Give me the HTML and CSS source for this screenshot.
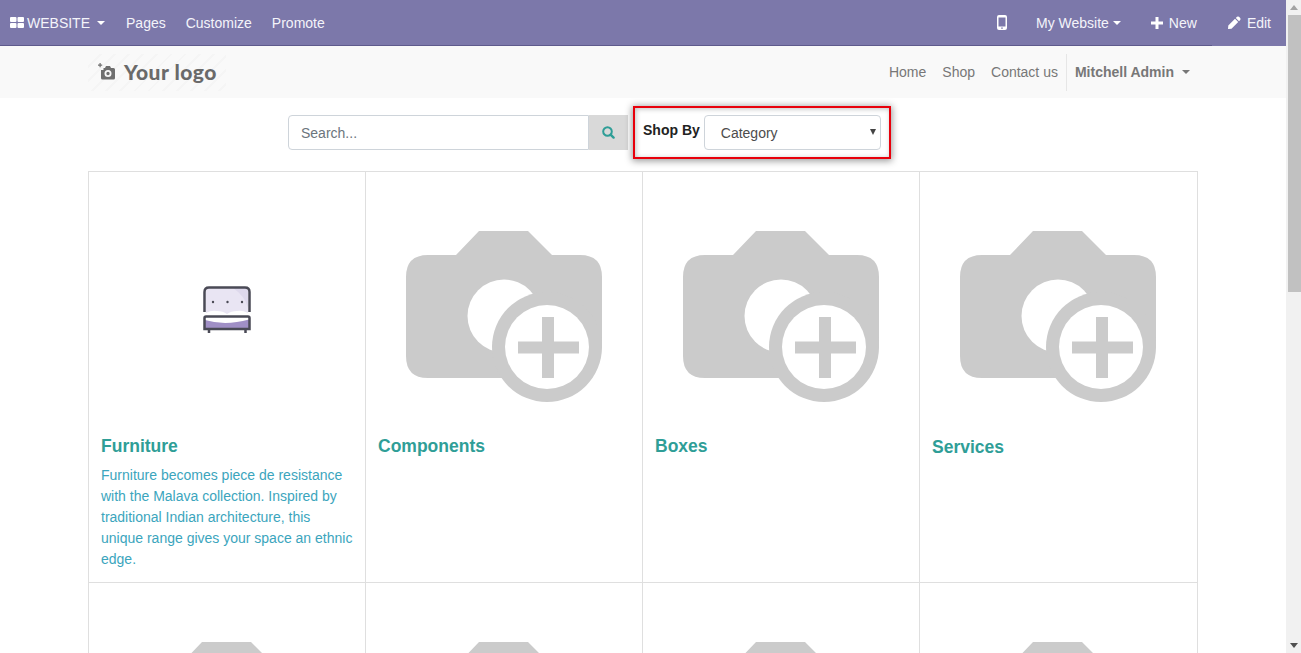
FILE: index.html
```html
<!DOCTYPE html>
<html lang="en">
<head>
  <meta charset="UTF-8" />
  <title>Shop By Category</title>
  <link rel="stylesheet" href="styles.css">
</head>

<body>
  <svg class="defs" width="0" height="0">
    <symbol id="placeholder" viewBox="0 0 196 172">
      <path fill="#cbcbcb" d="M50 24 L73 0 H122 L146 24 H174 Q196 24 196 46 V116 L186 147 H22 Q0 147 0 125 V46 Q0 24 22 24 Z" />
      <circle fill="#fff" cx="98" cy="85" r="36.500" />
      <circle fill="#cbcbcb" cx="141" cy="116" r="55" />
      <circle fill="#fff" cx="141" cy="116" r="42" />
      <path fill="#cbcbcb" d="M136 86 H148 V110.500 H173 V122.500 H148 V147 H136 V122.500 H112 V110.500 H136 Z" />
    </symbol>
  </svg>

  <div class="page">
    <!-- barre admin -->
    <nav class="admin-bar">
      <div class="admin-left">
        <a class="admin-link brand">
          <svg class="ico-apps" viewBox="0 0 14 11"><path fill="#fff" d="M0 1q0-1 1-1h4.500q1 0 1 1v3q0 1-1 1H1Q0 5 0 4zM7.500 1q0-1 1-1H13q1 0 1 1v3q0 1-1 1H8.500q-1 0-1-1zM0 7q0-1 1-1h4.500q1 0 1 1v3q0 1-1 1H1q-1 0-1-1zM7.500 7q0-1 1-1H13q1 0 1 1v3q0 1-1 1H8.500q-1 0-1-1z" /></svg>
          WEBSITE <span class="caret caret-wide"></span>
        </a>
        <a class="admin-link">Pages</a>
        <a class="admin-link">Customize</a>
        <a class="admin-link">Promote</a>
      </div>
      <div class="admin-right">
        <a class="admin-link mobile">
          <svg class="ico-mobile" viewBox="0 0 10 15"><path fill="#fff" fill-rule="evenodd" d="M2 0H8Q10 0 10 2V13Q10 15 8 15H2Q0 15 0 13V2Q0 0 2 0ZM1.500 2.500V11.500H8.500V2.500ZM4.200 12.500V13.800H5.800V12.500Z" /></svg>
        </a>
        <a class="admin-link site">My Website<span class="caret"></span></a>
        <a class="admin-link new">
          <svg class="ico-plus" viewBox="0 0 12 12"><path fill="#fff" d="M4.500 0H7.500V4.500H12V7.500H7.500V12H4.500V7.500H0V4.500H4.500Z" /></svg>
          New
        </a>
        <a class="admin-link edit">
          <svg class="ico-pencil" viewBox="0 0 13 13"><path fill="#fff" d="M9 .8Q10 0 11 .8L12.200 2Q13 3 12.200 4L11 5.200 7.800 2ZM7 2.800 10.200 6 3.500 12.700 0 13 .3 9.500Z" /></svg>
          Edit
        </a>
      </div>
    </nav>

    <!-- entete du site -->
    <header class="site-header">
      <div class="container header-row">
        <a class="logo">
          <svg class="ico-logo" viewBox="0 0 17 17"><path fill="#6f6f6f" fill-rule="evenodd" d="M1.500 0H2.700V1.500H4.200V2.700H2.700V4.200H1.500V2.700H0V1.500H1.500ZM8 3H12L13 5H15.500Q17 5 17 6.500V15Q17 16.500 15.500 16.500H4.500Q3 16.500 3 15V7H5.500V5H7ZM10 7A3.500 3.500 0 1 0 10 14 3.500 3.500 0 1 0 10 7ZM10 8.800A1.700 1.700 0 1 1 10 12.200 1.700 1.700 0 1 1 10 8.800Z" /></svg>
          <span class="logo-text">Your logo</span>
        </a>
        <div class="site-nav">
          <a class="site-link">Home</a>
          <a class="site-link">Shop</a>
          <a class="site-link">Contact us</a>
          <a class="site-user">Mitchell Admin <span class="caret caret-grey"></span></a>
        </div>
      </div>
    </header>

    <main class="container">
      <div class="filters">
        <div class="search-box">
          <input class="search-input" type="text" placeholder="Search...">
          <button class="search-btn">
            <svg class="ico-search" viewBox="0 0 13 13"><path fill="none" stroke="#2f9e97" stroke-width="2" d="M5.500 1.200A4.300 4.300 0 1 0 5.500 9.800 4.300 4.300 0 1 0 5.500 1.200Z" /><path stroke="#2f9e97" stroke-width="2.400" stroke-linecap="round" d="M8.800 8.800 11.600 11.600" /></svg>
          </button>
        </div>
        <div class="shop-by">
          <label class="shop-label">Shop By</label>
          <div class="shop-select">Category <span class="select-arrow"></span></div>
        </div>
      </div>

      <div class="category-grid">
        <div class="category">
          <div class="category-img">
            <svg class="bed" viewBox="0 0 48 47">
              <path fill="#e9e5f3" d="M3 27V6Q3 2 7 2H41Q45 2 45 6V27Q39 24 34 25 28 25 24 28 20 25 14 25 8 24 3 27Z" />
              <path fill="#ded9ec" d="M30 2H41Q45 2 45 6V22Q42 10 30 2Z" />
              <path fill="none" stroke="#4a4a56" stroke-width="2.500" d="M1.500 26V6Q1.500 1.500 6 1.500H42Q46.500 1.500 46.500 6V26" />
              <circle fill="#4a4a56" cx="10" cy="16" r="1.200" /><circle fill="#4a4a56" cx="24.500" cy="16" r="1.200" /><circle fill="#4a4a56" cx="39" cy="16" r="1.200" />
              <path fill="#a08fc6" d="M2 34Q22 40 46 33.500V44H2Z" />
              <path fill="none" stroke="#4a4a56" stroke-width="2.500" d="M1.500 43V32Q1.500 30.500 3 30.500H45Q46.500 30.500 46.500 32V43Z" />
              <path stroke="#4a4a56" stroke-width="2.500" d="M6 43V47M42.500 43V47" />
            </svg>
          </div>
          <h5 class="category-title">Furniture</h5>
          <p class="category-desc">Furniture becomes piece de resistance with the Malava collection. Inspired by traditional Indian architecture, this unique range gives your space an ethnic edge.</p>
        </div>
        <div class="category">
          <div class="category-img"><svg class="camera"><use href="#placeholder" /></svg></div>
          <h5 class="category-title">Components</h5>
        </div>
        <div class="category">
          <div class="category-img"><svg class="camera"><use href="#placeholder" /></svg></div>
          <h5 class="category-title">Boxes</h5>
        </div>
        <div class="category">
          <div class="category-img"><svg class="camera"><use href="#placeholder" /></svg></div>
          <h5 class="category-title title-low">Services</h5>
        </div>
        <div class="category">
          <div class="category-img"><svg class="camera"><use href="#placeholder" /></svg></div>
        </div>
        <div class="category">
          <div class="category-img"><svg class="camera"><use href="#placeholder" /></svg></div>
        </div>
        <div class="category">
          <div class="category-img"><svg class="camera"><use href="#placeholder" /></svg></div>
        </div>
        <div class="category">
          <div class="category-img"><svg class="camera"><use href="#placeholder" /></svg></div>
        </div>
      </div>
    </main>
  </div>

  <!-- barre de defilement -->
  <div class="scrollbar">
    <span class="scroll-arrow arrow-up"></span>
    <span class="scroll-thumb"></span>
    <span class="scroll-arrow arrow-down"></span>
  </div>
</body>
</html>
```

FILE: styles.css
```css
html, body {
  height: 100%;
  overflow: hidden;
}

body {
  margin: 0;
  display: flex;
  font-family: "Liberation Sans", Arial, sans-serif;
  font-size: 14px;
  color: #4c4c4c;
  background: #fff;
}

.defs {
  display: block;
  flex: none;
}

.page {
  flex: 1;
  min-width: 0;
}

.container {
  width: 1110px;
  margin: 0 auto;
}

/* barre admin */
.admin-bar {
  height: 45px;
  display: flex;
  justify-content: space-between;
  background: #7c78aa;
  border-bottom: 1px solid #5e5a8c;
  color: #fff;
}

.admin-left, .admin-right {
  display: flex;
  align-items: center;
}

.admin-link {
  display: flex;
  align-items: center;
  height: 46px;
  padding: 0 10px;
  color: #f4f4fa;
}

.brand {
  padding-right: 11px;
}

.ico-apps {
  width: 14px;
  height: 11px;
  margin-right: 3px;
}

.caret {
  display: inline-block;
  width: 0;
  height: 0;
  margin-left: 4px;
  border-top: 4px solid #fff;
  border-left: 4px solid transparent;
  border-right: 4px solid transparent;
}

.caret-wide {
  margin-left: 7px;
}

.caret-grey {
  border-top-color: #777;
  margin-left: 8px;
}

.mobile {
  padding: 0 19px 0 0;
}

.ico-mobile {
  width: 10px;
  height: 15px;
}

.site {
  padding: 0 16px 0 10px;
}

.new {
  padding: 0 15px 0 14px;
}

.ico-plus {
  width: 12px;
  height: 12px;
  margin-right: 6px;
}

.edit {
  height: 46px;
  padding: 0 15px 0 16px;
  background: #7c78aa;
}

.ico-pencil {
  width: 13px;
  height: 13px;
  margin-right: 6px;
}

/* entete */
.site-header {
  height: 52px;
  background: #f9f9f9;
}

.header-row {
  height: 100%;
  display: flex;
  justify-content: space-between;
  align-items: center;
}

.logo {
  display: flex;
  align-items: center;
  width: 128px;
  height: 37px;
  padding-left: 10px;
  background: repeating-linear-gradient(135deg, #f9f9f9 0 8px, #f5f5f5 8px 10px);
}

.ico-logo {
  width: 17px;
  height: 17px;
  margin: -2px 9px 0 0;
}

.logo-text {
  margin-top: -2px;
  font-family: Lato, sans-serif;
  font-weight: 900;
  font-size: 21px;
  letter-spacing: .5px;
  color: #6a6a6a;
}

.site-nav {
  display: flex;
  align-items: center;
  height: 37px;
  color: #777;
}

.site-link {
  padding: 0 8px;
}

.site-user {
  display: flex;
  align-items: center;
  height: 37px;
  padding: 0 8px;
  border-left: 1px solid #e6e6e6;
  font-weight: 700;
}

/* filtres */
.filters {
  display: flex;
  align-items: flex-start;
  padding: 17px 0 0 200px;
  height: 73px;
  box-sizing: border-box;
}

.search-box {
  display: flex;
  width: 340px;
  height: 35px;
}

.search-input {
  width: 301px;
  height: 35px;
  box-sizing: border-box;
  padding: 0 12px;
  border: 1px solid #ced4da;
  border-radius: 4px 0 0 4px;
  font: 14px "Liberation Sans", Arial, sans-serif;
  outline: none;
}

.search-input::placeholder {
  color: #6c757d;
}

.search-btn {
  width: 39px;
  height: 35px;
  padding: 0;
  border: 0;
  background: #d9d9d9;
}

.ico-search {
  width: 13px;
  height: 13px;
  display: block;
  margin: 0 auto;
}

.shop-by {
  position: relative;
  display: flex;
  align-items: flex-start;
  margin-left: 15px;
}

/* cadre rouge d'annotation */
.shop-by::before {
  content: "";
  position: absolute;
  left: -10px;
  top: -9px;
  width: 254px;
  height: 49px;
  border: 2px solid #e8000b;
  box-shadow: 0 1px 7px 1px rgba(0, 0, 0, .4), inset 1px 1px 5px rgba(0, 0, 0, .25);
}

.shop-label {
  position: relative;
  margin-right: 4px;
  padding-top: 7px;
  font-weight: 700;
  color: #222;
}

.shop-select {
  position: relative;
  width: 177px;
  height: 35px;
  box-sizing: border-box;
  padding: 9px 16px;
  line-height: 17px;
  background: #fff;
  border: 1px solid #ced4da;
  border-radius: 4px;
  color: #4c4c4c;
}

.select-arrow {
  position: absolute;
  right: 4px;
  top: 13px;
  border-top: 6px solid #444;
  border-left: 3.500px solid transparent;
  border-right: 3.500px solid transparent;
}

/* grille */
.category-grid {
  display: grid;
  grid-template-columns: repeat(3, 277px) 278px;
  width: 1110px;
  box-sizing: border-box;
  border-top: 1px solid #dfdfdf;
  border-left: 1px solid #dfdfdf;
}

.category {
  box-sizing: border-box;
  height: 411px;
  padding: 0 12px;
  border-right: 1px solid #dfdfdf;
  border-bottom: 1px solid #dfdfdf;
}

.category-img {
  display: flex;
  align-items: flex-start;
  height: 264px;
  margin: 0 -12px;
  padding-left: 40px;
}

.camera {
  width: 196px;
  height: 172px;
  margin-top: 59px;
}

.bed {
  width: 48px;
  height: 47px;
  margin: 114px 0 0 74px;
}

.category-title {
  margin: 0 0 8px;
  font-size: 17.5px;
  line-height: 21px;
  font-weight: 700;
  color: #2f9e97;
}

.title-low {
  padding-top: 1px;
}

.category-desc {
  margin: 0;
  line-height: 21px;
  color: #3ba5bd;
}

/* barre de defilement */
.scrollbar {
  flex: none;
  width: 15px;
  display: flex;
  flex-direction: column;
  background: #f1f1f1;
}

.scroll-thumb {
  height: 277px;
  margin-left: 2px;
  background: #c1c1c1;
}

.scroll-arrow {
  width: 0;
  height: 0;
  margin: 0 auto;
  border-left: 4px solid transparent;
  border-right: 4px solid transparent;
}

.arrow-up {
  margin-top: 5px;
  margin-bottom: 5px;
  border-bottom: 5px solid #a3a3a3;
}

.arrow-down {
  margin-top: auto;
  margin-bottom: 5px;
  border-top: 5px solid #505050;
}
```
